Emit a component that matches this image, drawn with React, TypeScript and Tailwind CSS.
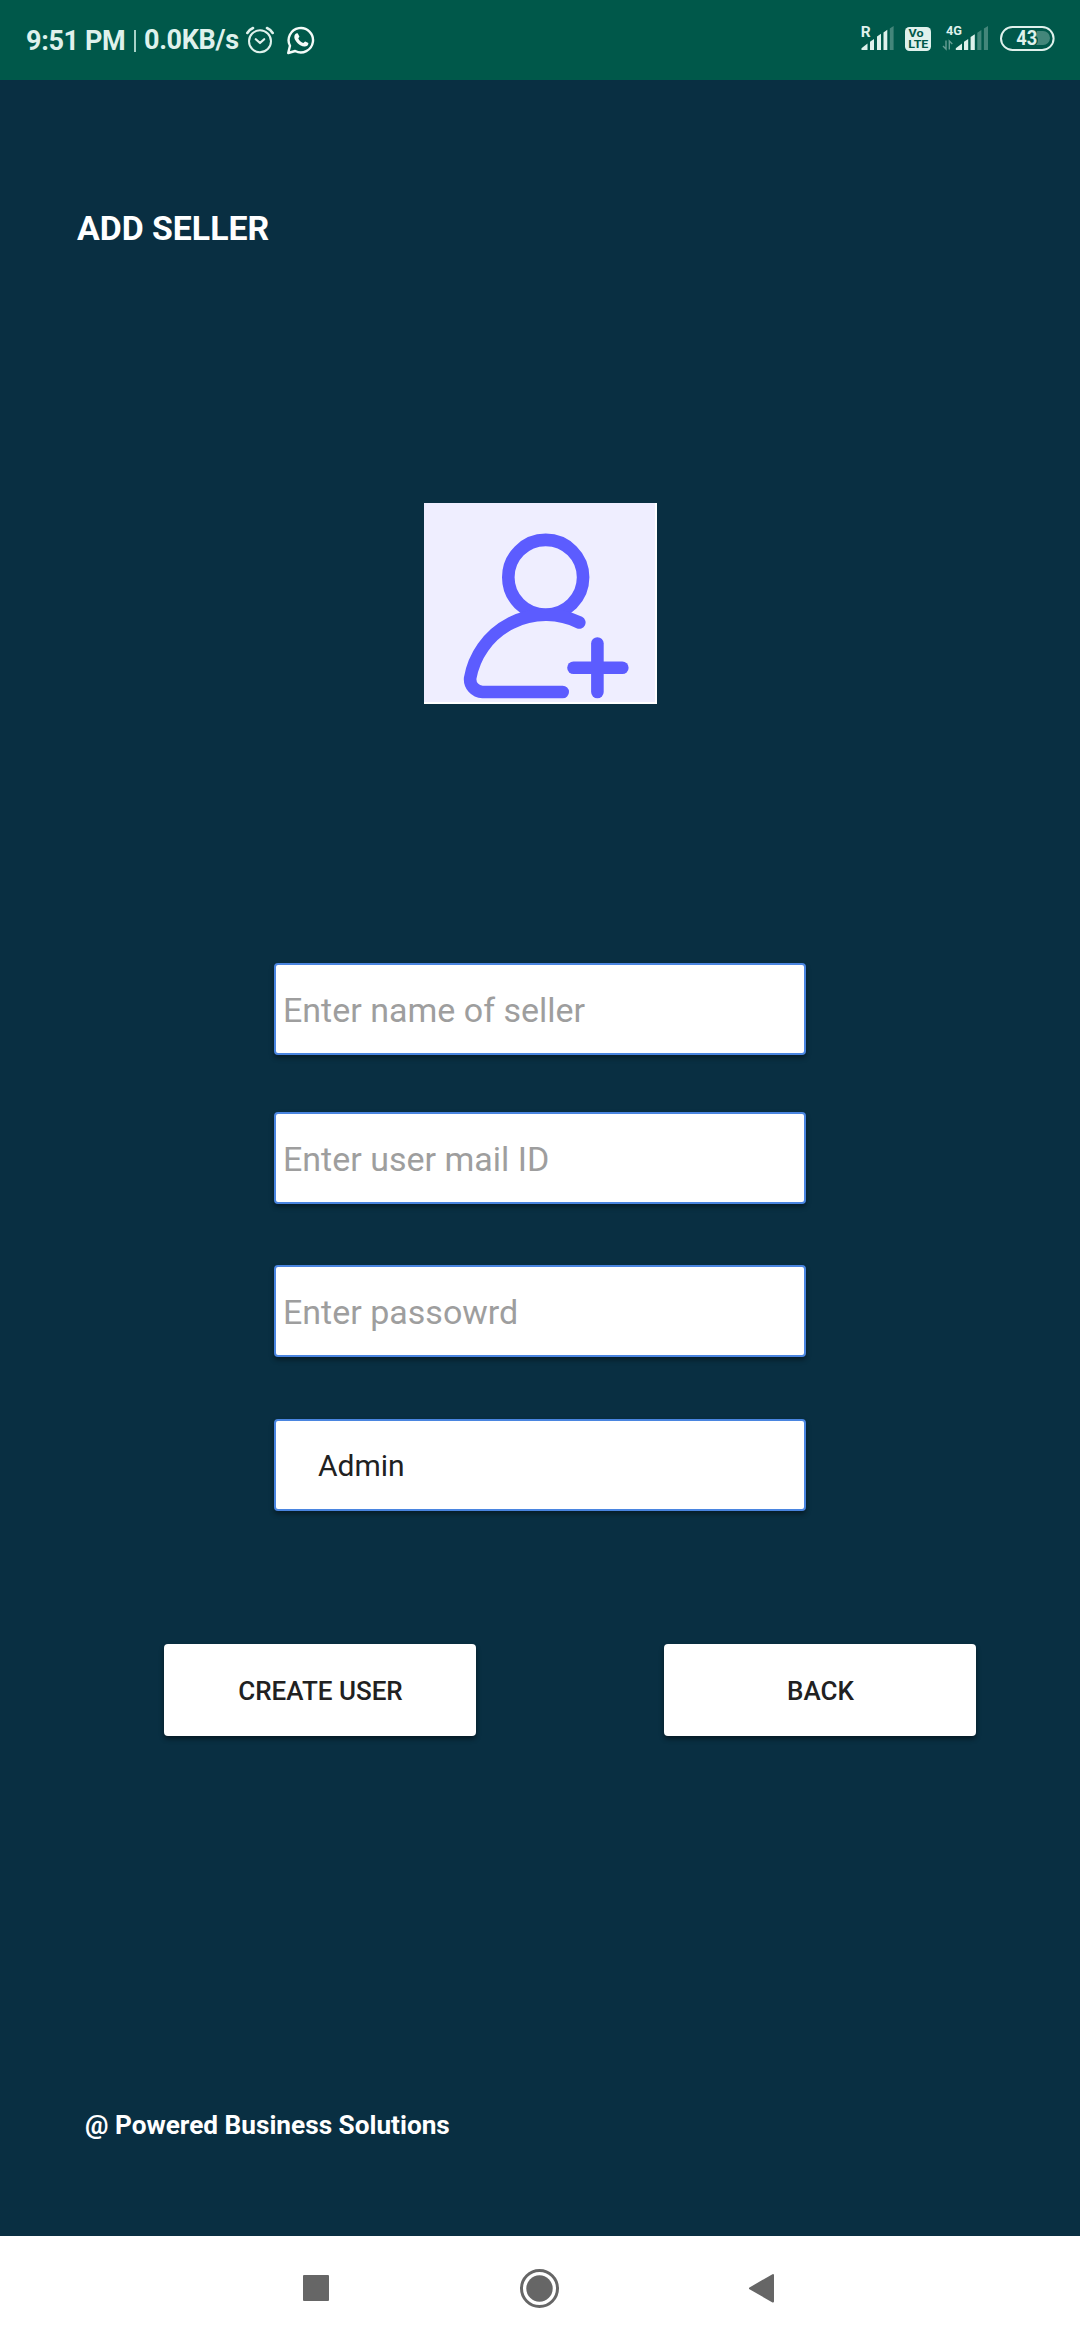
import React from "react";

function AlarmIcon() {
  return (
    <svg width="28" height="28" viewBox="0 0 28 28" fill="none" stroke="#dff1ec" strokeLinecap="round">
      <circle cx="14" cy="15.3" r="11" strokeWidth="2" />
      <path d="M9.8 13.2 L14 17 L18.2 13.2" strokeWidth="2.2" strokeLinejoin="round" />
      <path d="M1.3 7 Q3.4 3.6 7 2" strokeWidth="2.6" />
      <path d="M26.7 7 Q24.6 3.6 21 2" strokeWidth="2.6" />
    </svg>
  );
}

function WhatsAppIcon() {
  return (
    <svg width="30" height="30" viewBox="0 0 30 30" fill="none">
      <path
        d="M2.2 28 L4 20.8 A12.2 12.2 0 1 1 9.2 26 Z"
        stroke="#f4fbf9"
        strokeWidth="2.4"
        strokeLinejoin="round"
      />
      <path
        d="M9 9.6 C9.8 8.4 11 8 11.8 8.4 L13.4 11.6 C13.4 12.4 12.4 13 12.3 13.5 C13.2 15.6 15 17.1 17.2 18 C17.8 17.8 18.6 16.4 19.3 16.4 L22.4 18 C22.6 20.4 20.2 21.8 18.4 21.6 C13.4 20.8 8.8 16 8.3 12.4 C8.2 11.4 8.5 10.4 9 9.6 Z"
        fill="#f4fbf9"
      />
    </svg>
  );
}

function StatusIcons() {
  return (
    <svg width="240" height="80" viewBox="0 0 240 80" fill="#dff1ec" fontFamily="Roboto, sans-serif">
      <text x="20.8" y="37" fontSize="15.5" fontWeight="700">R</text>
      <path d="M21.5 50 V48.2 L27.5 43.5 V50 Z" />
      <path d="M30 50 V41.8 L34 39 V50 Z" />
      <path d="M37 50 V36.5 L41 33.8 V50 Z" />
      <path d="M43.5 50 V32.5 L47.3 29.8 V50 Z" />
      <path d="M49.8 50 V28.5 L53.6 26 V50 Z" opacity="0.3" />

      <rect x="65" y="27" width="26" height="24" rx="4.5" />
      <g fill="#00584a" fontWeight="700">
        <text x="68.6" y="37.3" fontSize="11.5" textLength="15" lengthAdjust="spacingAndGlyphs">Vo</text>
        <text x="68.3" y="48.2" fontSize="11.5" textLength="20" lengthAdjust="spacingAndGlyphs">LTE</text>
      </g>

      <text x="106" y="35" fontSize="13" fontWeight="700" textLength="16" lengthAdjust="spacingAndGlyphs">4G</text>
      <g stroke="#dff1ec" strokeWidth="1.4" fill="none" opacity="0.45">
        <path d="M106 40.5 V49 L103 46" />
        <path d="M109.3 49.5 V41 L112.3 44" />
      </g>
      <path d="M115.8 50 V48.2 L122 43.5 V50 Z" />
      <path d="M124 50 V41.8 L128.2 39 V50 Z" />
      <path d="M130.6 50 V37 L134.8 34.2 V50 Z" />
      <path d="M137.3 50 V32.8 L141.4 30 V50 Z" opacity="0.3" />
      <path d="M143.9 50 V28.5 L148 26 V50 Z" opacity="0.3" />

      <rect x="161" y="27" width="52.6" height="23" rx="11.5" fill="none" stroke="#dff1ec" strokeWidth="2" />
      <path d="M197 31 H203 A7 7 0 0 1 203 45 H196 Q198 43 198 40 Q198 37 196 36 Z" opacity="0.3" />
      <text x="176.3" y="45" fontSize="19.5" fontWeight="700" textLength="21" lengthAdjust="spacingAndGlyphs">43</text>
    </svg>
  );
}

function AddUserIcon() {
  return (
    <svg
      width="233"
      height="201"
      viewBox="0 0 233 201"
      fill="none"
      stroke="#5c5cff"
      strokeWidth="12.6"
      strokeLinecap="round"
      strokeLinejoin="round"
    >
      <circle cx="121.7" cy="74.3" r="37.4" />
      <path d="M155.3 119.5 A76.8 76.8 0 0 0 46.2 175 A12.7 12.7 0 0 0 58.5 189 H138.7" />
      <path d="M149.5 164.7 H198.3" />
      <path d="M173.4 140.5 V189" />
    </svg>
  );
}

const fieldClass =
  "block h-[92px] w-[532px] rounded-[4px] border-2 border-[#4a85e0] bg-white shadow-[0_3px_5px_rgba(0,0,0,0.4)] outline-none";

function Field({ placeholder }: { placeholder: string }) {
  return (
    <input
      placeholder={placeholder}
      className={`${fieldClass} pt-[2px] pl-[7px] text-[34px] text-[#212121] placeholder:text-[#9e9e9e]`}
    />
  );
}

function ActionButton({ children }: { children: React.ReactNode }) {
  return (
    <button className="h-[92px] w-[312px] rounded-[4px] bg-white pt-[2px] pl-px text-[26px] font-medium text-[#212121] shadow-[0_3px_5px_rgba(0,0,0,0.45)]">
      {children}
    </button>
  );
}

export default function App() {
  return (
    <div className="flex h-[2340px] w-[1080px] flex-col overflow-hidden bg-[#092f42] font-['Roboto',sans-serif]">
      <header className="flex h-20 shrink-0 justify-between bg-[#00584a]">
        <div className="flex h-20 items-center pl-[26px] text-[27px] font-bold tracking-[-0.35px] whitespace-pre text-[#dff1ec]">
          <span className="w-[100px] pt-[2px]">9:51 PM</span>
          <span className="mt-[2px] mr-[8px] ml-[8px] h-[22px] w-[2px] bg-[#a9d2c8]" />
          <span className="w-[102px]">0.0KB/s</span>
          <AlarmIcon />
          <span className="ml-[12px]"><WhatsAppIcon /></span>
        </div>
        <StatusIcons />
      </header>

      <main className="flex flex-1 flex-col">
        <h1 className="mt-[129px] ml-[77px] h-10 text-[33.8px] leading-10 font-bold text-white">ADD SELLER</h1>

        <div className="mt-[254px] ml-[424px] h-[201px] w-[233px] border-r-2 border-b-2 border-white bg-[#efeeff]">
          <AddUserIcon />
        </div>

        <form className="mt-[259px] ml-[274px] flex flex-col">
          <Field placeholder="Enter name of seller" />
          <div className="mt-[57px]"><Field placeholder="Enter user mail ID" /></div>
          <div className="mt-[61px]"><Field placeholder="Enter passowrd" /></div>
          <div className={`${fieldClass} mt-[62px] pl-[42px] text-[30px] leading-[90px] text-[#212121]`}>Admin</div>
        </form>

        <div className="mt-[133px] ml-[164px] flex gap-[188px]">
          <ActionButton>CREATE USER</ActionButton>
          <ActionButton>BACK</ActionButton>
        </div>

        <p className="mt-[369px] ml-[85px] h-10 text-[26.2px] leading-10 font-bold text-white">
          @ Powered Business Solutions
        </p>
      </main>

      <nav className="h-[104px] shrink-0 bg-white">
        <div className="flex h-[104px] items-center pl-[303px]">
          <div className="h-[26px] w-[26px] rounded-[1px] bg-[#666666]" />
          <svg className="ml-[191px]" width="39" height="39" viewBox="0 0 39 39">
            <circle cx="19.5" cy="19.5" r="18" fill="none" stroke="#666666" strokeWidth="3" />
            <circle cx="19.5" cy="19.5" r="13.2" fill="#666666" />
          </svg>
          <svg className="ml-[189px]" width="27" height="30" viewBox="0 0 27 30">
            <path d="M2 15.3 L25 2 V28.6 Z" fill="#666666" stroke="#666666" strokeWidth="2" strokeLinejoin="round" />
          </svg>
        </div>
      </nav>
    </div>
  );
}
